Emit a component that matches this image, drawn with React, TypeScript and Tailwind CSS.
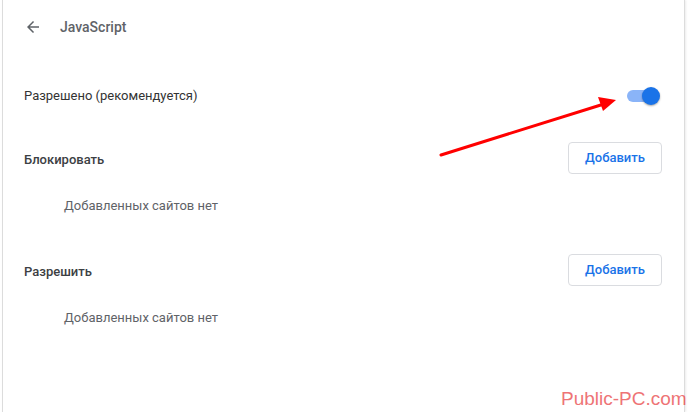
import React from 'react';

function Toggle() {
  return (
    <div className="relative w-[34px] h-[16px] flex items-center">
      <div className="w-[28px] h-[12px] rounded-full bg-[#8ab4f8] ml-[1px]" />
      <div className="absolute right-0 top-[-1px] w-[18px] h-[18px] rounded-full bg-[#1a73e8] shadow-[0_1px_2px_rgba(0,0,0,0.35)]" />
    </div>
  );
}

function AddButton() {
  return (
    <button
      type="button"
      className="w-[94px] h-[32px] rounded-[4px] border border-[#dadce0] bg-white text-[13px] font-medium text-[#1a73e8]"
    >
      Добавить
    </button>
  );
}

function Section({ title }: { title: string }) {
  return (
    <div className="pb-[16px]">
      <div className="flex items-center justify-between h-[48px] pl-[21px] pr-[22px]">
        <span className="text-[13px] font-medium text-[#3c4043] pt-[4px]">{title}</span>
        <AddButton />
      </div>
      <div className="h-[48px] flex items-center pl-[61px] text-[13px] text-[#5f6368]">
        Добавленных сайтов нет
      </div>
    </div>
  );
}

export default function App() {
  return (
    <div className="relative w-[690px] h-[412px] bg-white overflow-hidden font-['Roboto',sans-serif]">
      <div className="ml-[2px] w-[683px] h-full border-l border-r border-[#dcdcdc] shadow-[1px_0_2px_rgba(0,0,0,0.08)]">
        <div className="flex items-center h-[54px] pl-[21px]">
          <svg width="18" height="18" viewBox="0 0 24 24" className="text-[#5f6368]">
            <path d="M20 11H7.83l5.59-5.59L12 4l-8 8 8 8 1.41-1.41L7.83 13H20v-2z" fill="currentColor" />
          </svg>
          <span className="ml-[18px] text-[14px] font-medium text-[#5f6368]">JavaScript</span>
        </div>
        <div className="flex items-center justify-between h-[80px] pl-[21px] pr-[24px] pt-[4px]">
          <span className="text-[13px] text-[#333333]">Разрешено (рекомендуется)</span>
          <Toggle />
        </div>
        <Section title="Блокировать" />
        <Section title="Разрешить" />
      </div>

      <svg className="absolute left-0 top-0" width="690" height="412">
        <line x1="441" y1="155" x2="604" y2="104" stroke="#ff0000" strokeWidth="3" strokeLinecap="round" />
        <polygon points="616,100 598,97 603,111" fill="#ff0000" />
      </svg>

      <div className="absolute left-[561px] top-[389px] whitespace-nowrap text-[19px] leading-none text-[#e8393b] opacity-70 font-['Liberation_Sans',sans-serif]">
        Public-PC.com
      </div>
    </div>
  );
}
